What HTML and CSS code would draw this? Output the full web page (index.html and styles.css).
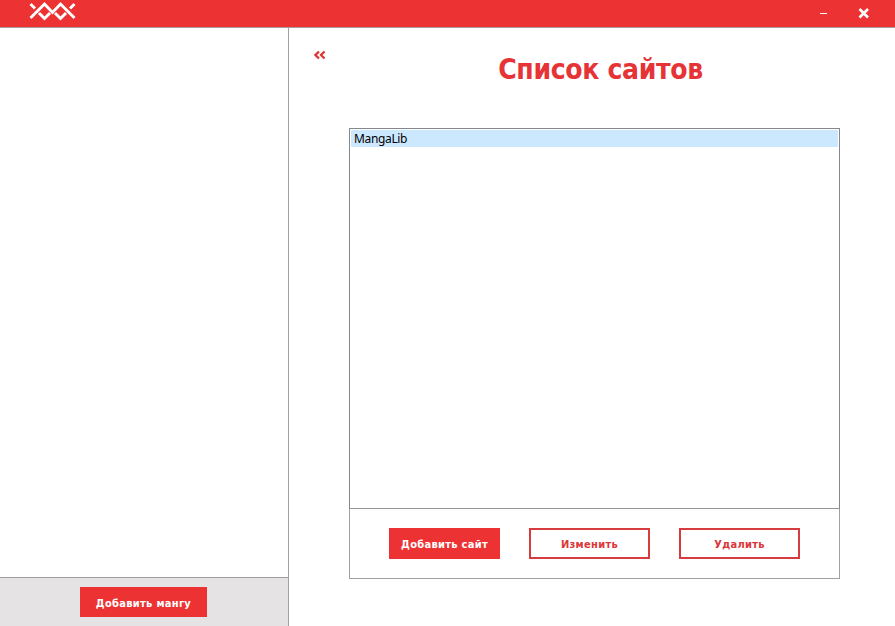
FILE: index.html
```html
<!DOCTYPE html>
<html lang="ru">
<head>
<meta charset="utf-8">
<title>Список сайтов</title>
<link rel="stylesheet" href="styles.css">
</head>
<body>
<header class="titlebar">
  <svg class="logo" width="48" height="22" viewBox="0 0 48 22" fill="none" stroke="#fff" stroke-width="2.9">
    <path d="M1.500 18 15.500 4 23.500 12.500 31.500 4 45.500 18"/>
    <path d="M1.500 4 6 8.500M10 13 15.500 18.500 21 13M26 13 31.500 18.500 37 13M41 8.500 45.500 4"/>
  </svg>
  <div class="controls">
    <svg width="8" height="22" viewBox="0 0 8 22"><path d="M1 13.500h7" stroke="#fff"/></svg>
    <svg width="12" height="22" viewBox="0 0 12 22"><path d="m1.500 9 8.500 8.500m0-8.500-8.500 8.500" stroke="#fff" stroke-width="2.600"/></svg>
  </div>
</header>
<div class="body">
  <aside class="sidebar">
    <div class="manga-list"></div>
    <div class="sidebar-footer"><button class="btn primary manga"><span>Добавить мангу</span></button></div>
  </aside>
  <main class="content">
    <div class="heading">
      <svg class="back" width="12" height="10" viewBox="0 0 12 10" fill="none" stroke="#e03436" stroke-width="2.300"><path d="M5 1.500 1.500 5 5 8.500M10.500 1.500 7 5l3.500 3.500"/></svg>
      <h1><span>Список сайтов</span></h1>
    </div>
    <section class="panel">
      <ul class="sites"><li>MangaLib</li></ul>
      <div class="actions">
        <button class="btn primary add"><span>Добавить сайт</span></button>
        <button class="btn outline"><span>Изменить</span></button>
        <button class="btn outline"><span>Удалить</span></button>
      </div>
    </section>
  </main>
</div>
</body>
</html>
```
FILE: styles.css
```css
* { box-sizing: border-box; }
body {
  margin: 0;
  height: 626px;
  display: flex;
  flex-direction: column;
  overflow: hidden;
  background: #fff;
  font-family: "DejaVu Sans Condensed", "DejaVu Sans", sans-serif;
}
.titlebar {
  height: 28px;
  flex: none;
  display: flex;
  justify-content: space-between;
  background: #ed3233;
  border-bottom: 1px solid #a99b9d;
  padding: 0 25px 0 29px;
}
.controls { display: flex; gap: 31px; }
.body { flex: 1; display: flex; min-height: 0; }
.sidebar {
  width: 289px;
  display: flex;
  flex-direction: column;
  border-right: 1px solid #a0a0a0;
}
.manga-list { flex: 1; }
.sidebar-footer {
  height: 49px;
  padding: 9px 0 0 80px;
  background: #e5e3e4;
  border-top: 1px solid #a0a0a0;
}
.content { flex: 1; padding: 0 55px 0 60px; }
.heading { height: 100px; position: relative; text-align: center; }
.back { position: absolute; left: -35px; top: 22px; }
h1 {
  margin: 0 -10px;
  padding-top: 22px;
  padding-left: 12px;
  font: bold 28px/40px "DejaVu Sans Condensed", "DejaVu Sans", sans-serif;
  letter-spacing: -0.35px;
  color: #e63335;
}
.panel { border: 1px solid #a0a0a0; height: 451px; width: 491px; }
.sites {
  list-style: none;
  margin: -1px;
  padding: 1px;
  height: 381px;
  border: 1px solid #828790;
  border-bottom-color: #969696;
}
.sites li {
  height: 17px;
  padding-left: 3px;
  background: #cce8ff;
  color: #000;
  font: 12px/17px "Noto Sans", sans-serif;
  letter-spacing: -0.35px;
}
.actions { display: flex; padding: 20px 39px; }
.btn {
  height: 31px;
  padding: 0;
  border: 0;
  font: bold 11px/32px "DejaVu Sans Condensed", "DejaVu Sans", sans-serif;
  letter-spacing: 0.3px;
  white-space: nowrap;
}
.primary { background: #ed3233; color: #fff; }
.outline { width: 121px; background: #fff; color: #dc3638; border: 2px solid #d63b3e; line-height: 28px; margin-left: 29px; }
.btn span { position: relative; top: 1px; }
.add { width: 111px; }
.manga { width: 127px; height: 30px; letter-spacing: 0.3px; }
```
